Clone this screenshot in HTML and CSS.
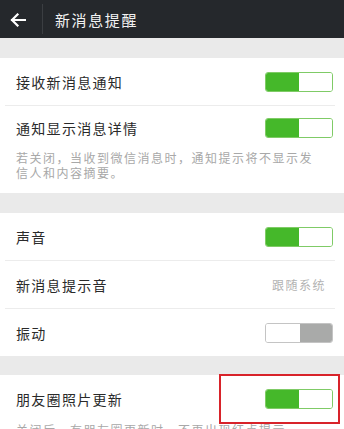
FILE: index.html
```html
<!DOCTYPE html>
<html lang="zh">
<head>
<meta charset="utf-8">
<title>新消息提醒</title>
<link rel="stylesheet" href="styles.css">
</head>
<body>
<div class="page">
  <header class="topbar">
    <span class="back">
      <svg width="16" height="14" viewBox="0 0 16 14"><path d="M15 7H2M7.5 1.5L2 7l5.5 5.5" fill="none" stroke="#fff" stroke-width="2.2" stroke-linecap="square"/></svg>
    </span>
    <span class="divider"></span>
    <span class="title">新消息提醒</span>
  </header>

  <section class="group g1">
    <div class="row sep">
      <span class="label">接收新消息通知</span>
      <span class="toggle on"><i></i><b></b></span>
    </div>
    <div class="row short">
      <span class="label">通知显示消息详情</span>
      <span class="toggle on"><i></i><b></b></span>
    </div>
    <p class="desc">若关闭，当收到微信消息时，通知提示将不显示发信人和内容摘要。</p>
  </section>

  <section class="group g2">
    <div class="row sep">
      <span class="label">声音</span>
      <span class="toggle on"><i></i><b></b></span>
    </div>
    <div class="row sep">
      <span class="label">新消息提示音</span>
      <span class="value">跟随系统</span>
    </div>
    <div class="row">
      <span class="label">振动</span>
      <span class="toggle off"><i></i><b></b></span>
    </div>
  </section>

  <section class="group g3">
    <div class="row short3">
      <span class="label">朋友圈照片更新</span>
      <span class="toggle on"><i></i><b></b></span>
    </div>
    <p class="desc last">关闭后，有朋友圈更新时，不再出现红点提示。</p>
    <span class="highlight"></span>
  </section>
</div>
</body>
</html>
```

FILE: styles.css
```css
html, body {
  margin: 0;
  padding: 0;
}
body {
  background: #eaeaea;
  font-family: "Noto Sans CJK SC", "Noto Sans", sans-serif;
  width: 344px;
  height: 429px;
  overflow: hidden;
}
.page {
  display: flex;
  flex-direction: column;
  gap: 20px;
}
.topbar {
  height: 38px;
  background: #25282c;
  display: flex;
  align-items: center;
}
.back {
  width: 16px;
  height: 14px;
  margin-left: 10px;
  margin-top: 2px;
  display: flex;
}
.divider {
  width: 1px;
  height: 30px;
  background: #3b3e42;
  margin-left: 16px;
}
.title {
  color: #f2f2f2;
  font-size: 15px;
  letter-spacing: 1.6px;
  margin-left: 12px;
  margin-top: 1px;
}
.group {
  background: #fff;
  position: relative;
}
.g3 {
  margin-top: -1px;
}
.row {
  height: 47px;
  display: flex;
  align-items: center;
  justify-content: space-between;
  padding: 0 11px 0 16px;
  position: relative;
}
.row.sep {
  border-bottom: 1px solid #ececec;
  margin: 0 9px 0 5px;
  padding: 0 2px 0 11px;
}
.row.short {
  height: 44px;
}
.label {
  font-size: 14px;
  letter-spacing: 1.3px;
  color: #2a2a2a;
}
.value {
  font-size: 12px;
  letter-spacing: 1.5px;
  color: #b3b3b3;
  margin-right: 7px;
}
.toggle {
  width: 68px;
  height: 20px;
  display: flex;
  border-radius: 3px;
  overflow: hidden;
  box-sizing: border-box;
}
.toggle i, .toggle b {
  display: block;
  height: 100%;
  box-sizing: border-box;
}
.toggle.on {
  border: 1px solid #7fcb66;
}
.toggle.on i {
  width: 33px;
  background: #45b82a;
}
.toggle.on b {
  flex: 1;
  background: #fff;
}
.toggle.off {
  border: 1px solid #c4c4c4;
}
.toggle.off i {
  width: 34px;
  background: #fff;
}
.toggle.off b {
  flex: 1;
  background: #a9aaa9;
}
.desc {
  margin: 0;
  padding: 0 20px 13px 16px;
  font-size: 12px;
  line-height: 15px;
  letter-spacing: 1.5px;
  color: #a8a8a8;
}
.desc.last {
  padding-top: 0;
}
.highlight {
  position: absolute;
  left: 219px;
  top: -1px;
  width: 121px;
  height: 50px;
  border: 2px solid #d8232a;
  box-sizing: border-box;
}
```
